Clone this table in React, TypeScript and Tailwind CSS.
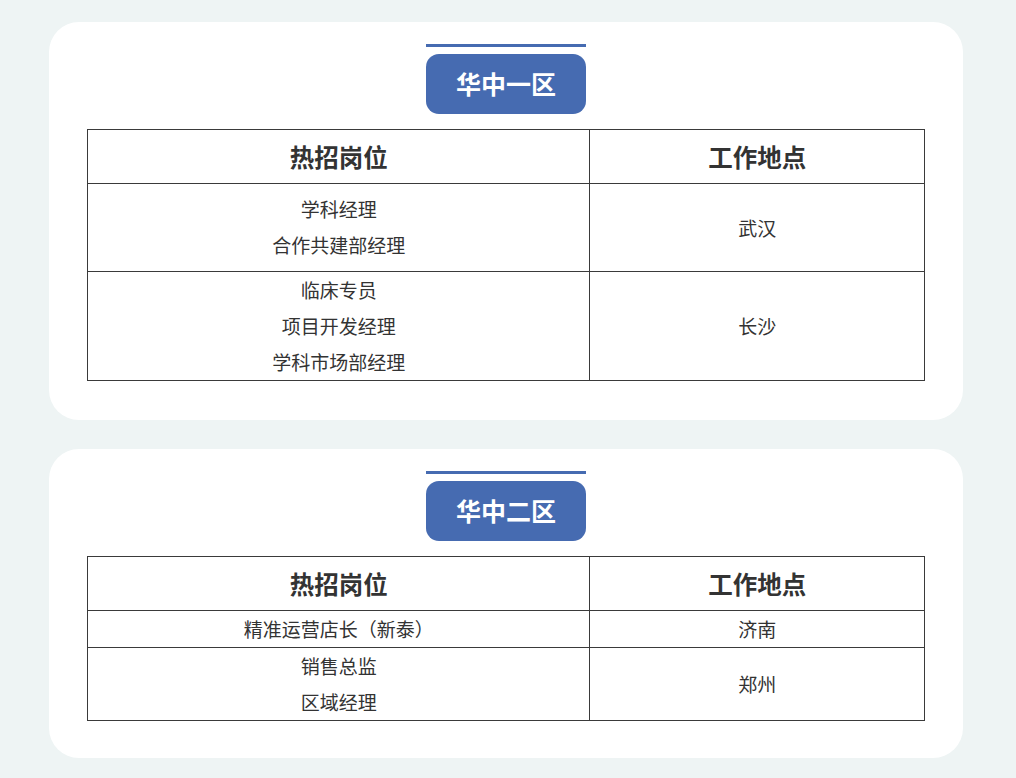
import React from "react";

type Row = { jobs: string[]; place: string; pad?: boolean };

const regions: { name: string; rows: Row[]; pb: string }[] = [
  {
    name: "华中一区",
    pb: "pb-[39px]",
    rows: [
      { jobs: ["学科经理", "合作共建部经理"], place: "武汉", pad: true },
      { jobs: ["临床专员", "项目开发经理", "学科市场部经理"], place: "长沙" },
    ],
  },
  {
    name: "华中二区",
    pb: "pb-[37px]",
    rows: [
      { jobs: ["精准运营店长（新泰）"], place: "济南" },
      { jobs: ["销售总监", "区域经理"], place: "郑州" },
    ],
  },
];

function Card({ name, rows, pb }: { name: string; rows: Row[]; pb: string }) {
  return (
    <div className={`bg-white rounded-[30px] pt-[22px] px-[38px] ${pb} flex flex-col items-center`}>
      <div className="w-[160px] h-[3px] bg-[#466bb1]" />
      <div className="mt-[7px] w-[160px] h-[60px] rounded-[13px] bg-[#466bb1] flex items-center justify-center text-white text-[25px] font-bold">
        {name}
      </div>
      <table className="mt-[15px] w-full border-collapse text-[#333]">
        <colgroup>
          <col className="w-[503px]" />
          <col className="w-[335px]" />
        </colgroup>
        <thead>
          <tr>
            <th className="border border-[#3a3a3a] h-[54px] text-[24.5px] font-bold text-center align-middle leading-[30px]">
              热招岗位
            </th>
            <th className="border border-[#3a3a3a] h-[54px] text-[24.5px] font-bold text-center align-middle leading-[30px]">
              工作地点
            </th>
          </tr>
        </thead>
        <tbody>
          {rows.map((r, i) => (
            <tr key={i}>
              <td
                className={`border border-[#3a3a3a] text-center align-middle text-[19px] leading-[36px] ${r.pad ? "pt-[7px] pb-[8px]" : "py-0"}`}
              >
                {r.jobs.map((j) => (
                  <div key={j}>{j}</div>
                ))}
              </td>
              <td className="border border-[#3a3a3a] text-center align-middle text-[19px] leading-[36px]">
                {r.place}
              </td>
            </tr>
          ))}
        </tbody>
      </table>
    </div>
  );
}

export default function App() {
  return (
    <div
      className="w-[1016px] h-[778px] bg-[#eef4f4] overflow-hidden"
      style={{ fontFamily: '"Noto Sans CJK SC", "Noto Sans", sans-serif' }}
    >
      <div className="ml-[49px] w-[914px] pt-[22px] flex flex-col gap-[29px]">
        {regions.map((r) => (
          <Card key={r.name} name={r.name} rows={r.rows} pb={r.pb} />
        ))}
      </div>
    </div>
  );
}
